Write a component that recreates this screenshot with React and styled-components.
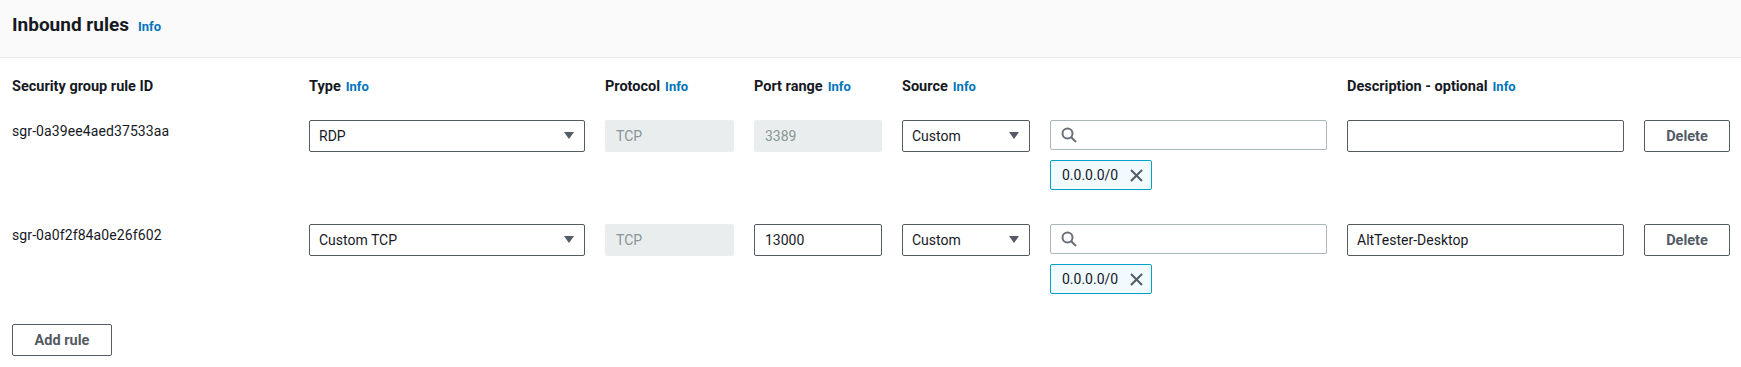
import React from 'react';
import styled, { createGlobalStyle } from 'styled-components';

const COLORS = {
  text: '#16191f',
  link: '#0073bb',
  border: '#545b64',
  borderLight: '#aab7b8',
  disabledBg: '#eaeded',
  disabledText: '#879596',
  headerBg: '#fafafa',
  divider: '#eaeded',
  chipBorder: '#00a1c9',
  chipBg: '#f1faff',
  icon: '#687078',
};

const GlobalStyle = createGlobalStyle`
  html, body {
    margin: 0;
    padding: 0;
    background: #ffffff;
    font-family: Roboto, "Liberation Sans", Arial, sans-serif;
    color: ${COLORS.text};
  }
  * { box-sizing: border-box; }
`;

const Panel = styled('section')`
  width: 100%;
  background: #ffffff;
`;

const PanelHeader = styled('header')`
  height: 58px;
  padding: 13px 12px 0;
  background: ${COLORS.headerBg};
  border-bottom: 1px solid ${COLORS.divider};
`;

const PanelTitle = styled('h2')`
  margin: 0;
  font-size: 19px;
  line-height: 24px;
  font-weight: 700;
  color: ${COLORS.text};
`;

const InfoLink = styled('a')`
  margin-left: ${({ $gap }) => $gap || 5}px;
  font-size: 13px;
  font-weight: 700;
  color: ${COLORS.link};
  text-decoration: none;
`;

const PanelBody = styled('div')`
  padding: 19px 11px 12px 12px;
`;

const RuleGrid = styled('div')`
  display: grid;
  grid-template-columns: 277px 276px 129px 128px 128px 277px 277px 86px;
  column-gap: 20px;
  align-items: start;
`;

const LabelRow = styled(RuleGrid)`
  margin-bottom: 23px;
`;

const Rows = styled('div')`
  display: flex;
  flex-direction: column;
  gap: 34px;
`;

const Label = styled('span')`
  font-size: 14.5px;
  line-height: 20px;
  font-weight: 700;
  white-space: nowrap;
`;

const RuleId = styled('span')`
  padding-top: 1px;
  font-size: 14px;
  line-height: 20px;
  letter-spacing: 0.1px;
`;

const Field = styled('div')`
  display: flex;
  align-items: center;
  justify-content: space-between;
  height: ${({ $height }) => $height || 32}px;
  padding: 0 10px 0 ${({ $padLeft }) => $padLeft || 9}px;
  border: 1px solid ${({ $disabled, $light }) =>
    $disabled ? COLORS.disabledBg : $light ? COLORS.borderLight : COLORS.border};
  border-radius: 2px;
  background: ${({ $disabled }) => ($disabled ? COLORS.disabledBg : '#ffffff')};
  color: ${({ $disabled }) => ($disabled ? COLORS.disabledText : COLORS.text)};
  font-size: 14px;
  line-height: 20px;
  white-space: nowrap;
`;

const SourceCell = styled('div')`
  display: flex;
  flex-direction: column;
  align-items: flex-start;
  gap: 10px;
`;

const SearchField = styled(Field)`
  width: 100%;
  justify-content: flex-start;
`;

const Chip = styled('div')`
  display: flex;
  align-items: center;
  gap: 12px;
  height: 30px;
  padding: 0 8px 0 11px;
  border: 1px solid ${COLORS.chipBorder};
  border-radius: 2px;
  background: ${COLORS.chipBg};
  font-size: 14px;
  color: ${COLORS.text};
`;

const Button = styled('button')`
  width: ${({ $width }) => $width || 86}px;
  height: 32px;
  padding: 0;
  border: 1px solid ${COLORS.border};
  border-radius: 2px;
  background: #ffffff;
  color: ${COLORS.border};
  font-family: inherit;
  font-size: 14.5px;
  font-weight: 700;
  cursor: pointer;
`;

const AddRuleWrapper = styled('div')`
  margin-top: 30px;
`;

const Caret = () => (
  <svg width="10" height="8" viewBox="0 0 10 8">
    <polygon points="0,0 10,0 5,7" fill={COLORS.border} />
  </svg>
);

const SearchIcon = () => (
  <svg width="16" height="16" viewBox="0 0 16 16" fill="none">
    <circle cx="6.5" cy="6.5" r="5" stroke={COLORS.icon} strokeWidth="2" />
    <line x1="10.2" y1="10.2" x2="15" y2="15" stroke={COLORS.icon} strokeWidth="2" />
  </svg>
);

const CloseIcon = () => (
  <svg width="13" height="13" viewBox="0 0 13 13">
    <path d="M1 1 L12 12 M12 1 L1 12" stroke={COLORS.border} strokeWidth="2" />
  </svg>
);

const Select = ({ value }) => (
  <Field>
    <span>{value}</span>
    <Caret />
  </Field>
);

const rules = [
  { id: 'sgr-0a39ee4aed37533aa', type: 'RDP', port: '3389', portEditable: false, description: '' },
  { id: 'sgr-0a0f2f84a0e26f602', type: 'Custom TCP', port: '13000', portEditable: true, description: 'AltTester-Desktop' },
];

const App = () => (
  <>
    <GlobalStyle />
    <Panel>
      <PanelHeader>
        <PanelTitle>
          Inbound rules<InfoLink $gap={9}>Info</InfoLink>
        </PanelTitle>
      </PanelHeader>
      <PanelBody>
        <LabelRow>
          <Label>Security group rule ID</Label>
          <Label>Type<InfoLink>Info</InfoLink></Label>
          <Label>Protocol<InfoLink>Info</InfoLink></Label>
          <Label>Port range<InfoLink>Info</InfoLink></Label>
          <Label>Source<InfoLink>Info</InfoLink></Label>
          <span />
          <Label>Description - optional<InfoLink>Info</InfoLink></Label>
          <span />
        </LabelRow>
        <Rows>
          {rules.map((rule) => (
            <RuleGrid key={rule.id}>
              <RuleId>{rule.id}</RuleId>
              <Select value={rule.type} />
              <Field $disabled $padLeft={10}>TCP</Field>
              <Field $disabled={!rule.portEditable} $padLeft={10}>{rule.port}</Field>
              <Select value="Custom" />
              <SourceCell>
                <SearchField $light $height={30} $padLeft={10}>
                  <SearchIcon />
                </SearchField>
                <Chip>
                  0.0.0.0/0
                  <CloseIcon />
                </Chip>
              </SourceCell>
              <Field $padLeft={9}>{rule.description}</Field>
              <Button>Delete</Button>
            </RuleGrid>
          ))}
        </Rows>
        <AddRuleWrapper>
          <Button $width={100}>Add rule</Button>
        </AddRuleWrapper>
      </PanelBody>
    </Panel>
  </>
);

export default App;
